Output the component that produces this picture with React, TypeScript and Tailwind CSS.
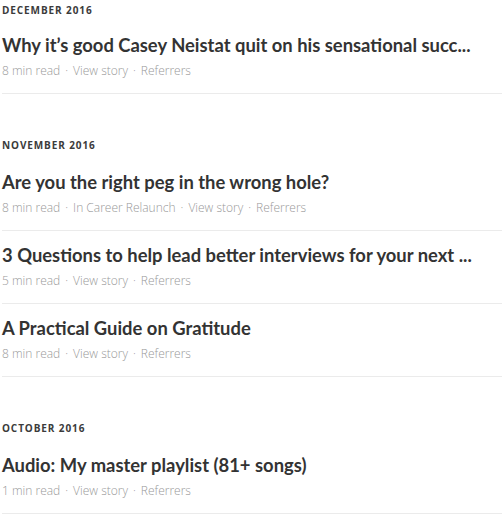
const sections = [
    {
        month: 'December 2016',
        stories: [
            {
                title: 'Why it’s good Casey Neistat quit on his sensational succ...',
                meta: ['8 min read', 'View story', 'Referrers'],
            },
        ],
    },
    {
        month: 'November 2016',
        stories: [
            {
                title: 'Are you the right peg in the wrong hole?',
                meta: ['8 min read', 'In Career Relaunch', 'View story', 'Referrers'],
            },
            {
                title: '3 Questions to help lead better interviews for your next ...',
                meta: ['5 min read', 'View story', 'Referrers'],
            },
            {
                title: 'A Practical Guide on Gratitude',
                meta: ['8 min read', 'View story', 'Referrers'],
            },
        ],
    },
    {
        month: 'October 2016',
        stories: [
            {
                title: 'Audio: My master playlist (81+ songs)',
                meta: ['1 min read', 'View story', 'Referrers'],
            },
        ],
    },
];

const Story = (props: { title: string; meta: string[] }) => {
    return (
        <div className="pt-3 pb-3 border-b border-[#ebebeb]">
            <div className="text-[18.4px] leading-6 font-bold text-[#333] font-['Lato',sans-serif] whitespace-nowrap">
                {props.title}
            </div>
            <div className="mt-1 text-[12px] leading-5 font-light text-[#999] font-['Open_Sans',sans-serif] flex">
                {props.meta.map((m, i) => (
                    <span key={m}>
                        {i > 0 && <span className="px-[5px]">·</span>}
                        {m}
                    </span>
                ))}
            </div>
        </div>
    );
};

export default function App() {
    return (
        <div className="w-[502px] h-[514px] overflow-hidden bg-white pl-[2px]">
            {sections.map((s, i) => (
                <div key={s.month} className={i > 0 ? 'pt-[43px]' : 'pt-[2px]'}>
                    <div
                        className={`text-[10px] leading-4 font-bold uppercase tracking-[0.09em] text-[#3b3b3b] font-['Open_Sans',sans-serif] ${
                            i > 0 ? 'mb-[5px]' : 'mb-[3px]'
                        }`}
                    >
                        {s.month}
                    </div>
                    {s.stories.map((st) => (
                        <Story key={st.title} title={st.title} meta={st.meta} />
                    ))}
                </div>
            ))}
        </div>
    );
}
